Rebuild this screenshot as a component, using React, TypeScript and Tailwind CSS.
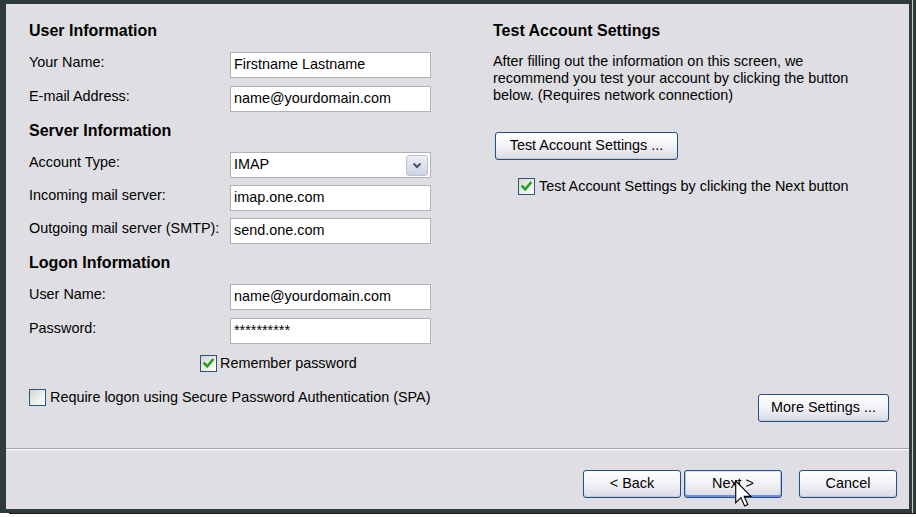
import React from 'react';

const font = { fontFamily: '"Liberation Sans", Arial, sans-serif' };

const TextBox = ({ value }: { value: string }) => (
  <div className="w-[201px] h-[26px] border border-[#b2b2b6] bg-white flex items-center px-[3px] text-[14.4px] text-black">
    {value}
  </div>
);

const CheckBox = ({ checked }: { checked: boolean }) => (
  <span className="w-[17px] h-[17px] shrink-0 border border-[#2a5580] bg-gradient-to-br from-[#d6d6d0] to-white flex items-center justify-center">
    {checked && (
      <svg width="13" height="13" viewBox="0 0 13 13">
        <path d="M2.5 6.5 L5.2 9.3 L10.5 3" stroke="#21a121" strokeWidth="2.6" fill="none" strokeLinecap="square" />
      </svg>
    )}
  </span>
);

const Button = ({ label, width, isDefault }: { label: string; width: string; isDefault?: boolean }) => (
  <button
    className={
      'h-[28px] rounded-[3px] border border-[#1f4f86] bg-gradient-to-b from-white via-[#f2f2f6] to-[#d9d9e4] text-[14.4px] text-black flex items-center justify-center ' +
      width +
      (isDefault
        ? ' shadow-[inset_0_-2px_0_#6f92da,inset_0_1px_0_#d4e4ff,inset_1px_0_0_#a9c2ef,inset_-1px_0_0_#a9c2ef]'
        : ' shadow-[inset_0_-1px_0_#c8c8d4]')
    }
  >
    {label}
  </button>
);

const Row = ({ label, children, mt }: { label: string; children: React.ReactNode; mt: string }) => (
  <div className={'flex items-start justify-between ' + mt}>
    <span className="pt-[2px] leading-[17px] text-[14.4px] text-black">{label}</span>
    {children}
  </div>
);

const Heading = ({ text, mt }: { text: string; mt: string }) => (
  <div className={'text-[16px] font-bold leading-[17px] text-black ' + mt}>{text}</div>
);

export default function App() {
  return (
    <div className="w-[916px] h-[517px] bg-white overflow-hidden relative" style={font}>
      <div className="w-[916px] h-[513px] bg-[#2e3b39] pl-[6px] pt-[4px] relative">
        <div className="absolute top-0 right-[3px] w-px h-[513px] bg-[#c9cfce]" />
        <div className="w-[903px] h-[505px] bg-[#dfdfe3] flex flex-col">
          {/* main area */}
          <div className="h-[444px] flex pl-[23px]">
            {/* left column */}
            <div className="w-[402px] flex flex-col pt-[18px]">
              <Heading text="User Information" mt="" />
              <Row label="Your Name:" mt="mt-[13px]">
                <TextBox value="Firstname Lastname" />
              </Row>
              <Row label="E-mail Address:" mt="mt-[8px]">
                <TextBox value="name@yourdomain.com" />
              </Row>
              <Heading text="Server Information" mt="mt-[10px]" />
              <Row label="Account Type:" mt="mt-[13px]">
                <div className="w-[201px] h-[26px] border border-[#b2b2b6] bg-white flex items-center justify-between pl-[3px] pr-[2px] text-[14.4px] text-black">
                  <span>IMAP</span>
                  <span className="w-[22px] h-[21px] rounded-[3px] border border-[#b9c1d6] bg-gradient-to-b from-[#eef0f6] to-[#cdd3e2] flex items-center justify-center">
                    <svg width="10" height="7" viewBox="0 0 10 7">
                      <path d="M1.5 1.5 L5 5 L8.5 1.5" stroke="#4d5160" strokeWidth="2" fill="none" />
                    </svg>
                  </span>
                </div>
              </Row>
              <Row label="Incoming mail server:" mt="mt-[7px]">
                <TextBox value="imap.one.com" />
              </Row>
              <Row label="Outgoing mail server (SMTP):" mt="mt-[7px]">
                <TextBox value="send.one.com" />
              </Row>
              <Heading text="Logon Information" mt="mt-[10px]" />
              <Row label="User Name:" mt="mt-[13px]">
                <TextBox value="name@yourdomain.com" />
              </Row>
              <Row label="Password:" mt="mt-[8px]">
                <TextBox value="**********" />
              </Row>
              <div className="flex items-center gap-[3px] mt-[9px] ml-[171px] text-[14.4px] text-black">
                <CheckBox checked />
                <span>Remember password</span>
              </div>
              <div className="flex items-center gap-[4px] mt-[12px] text-[14.4px] text-black">
                <CheckBox checked={false} />
                <span>Require logon using Secure Password Authentication (SPA)</span>
              </div>
            </div>

            {/* right column */}
            <div className="flex-1 ml-[62px] flex flex-col pt-[18px] pr-[20px] pb-[26px]">
              <Heading text="Test Account Settings" mt="" />
              <p className="w-[372px] mt-[14px] text-[14.4px] leading-[17px] text-black">
                After filling out the information on this screen, we recommend you test your account by clicking the
                button below. (Requires network connection)
              </p>
              <div className="mt-[28px] ml-[2px]">
                <Button label="Test Account Settings ..." width="w-[183px]" />
              </div>
              <div className="flex items-center gap-[4px] mt-[16px] ml-[25px] text-[14.4px] text-black">
                <CheckBox checked />
                <span>Test Account Settings by clicking the Next button</span>
              </div>
              <div className="mt-auto flex justify-end">
                <Button label="More Settings ..." width="w-[131px]" />
              </div>
            </div>
          </div>

          {/* separator */}
          <div className="h-[2px] border-t border-[#a2a2a6] border-b border-b-white" />

          {/* footer */}
          <div className="flex-1 flex items-start justify-end pt-[20px] pr-[12px]">
            <Button label="< Back" width="w-[98px]" />
            <div className="ml-[3px]">
              <Button label="Next >" width="w-[98px]" isDefault />
            </div>
            <div className="ml-[17px]">
              <Button label="Cancel" width="w-[98px]" />
            </div>
          </div>
        </div>
      </div>
      <div className="ml-[9px] h-px bg-[#1a1a1a]" />

      {/* mouse pointer */}
      <svg className="absolute left-[735px] top-[480px]" width="17" height="27" viewBox="0 0 12 19">
        <path d="M0.5 0.5 L0.5 16 L4.2 12.4 L6.8 18.3 L9 17.3 L6.5 11.5 L11.2 11.5 Z" fill="white" stroke="black" strokeWidth="0.8" strokeLinejoin="miter" />
      </svg>
    </div>
  );
}
